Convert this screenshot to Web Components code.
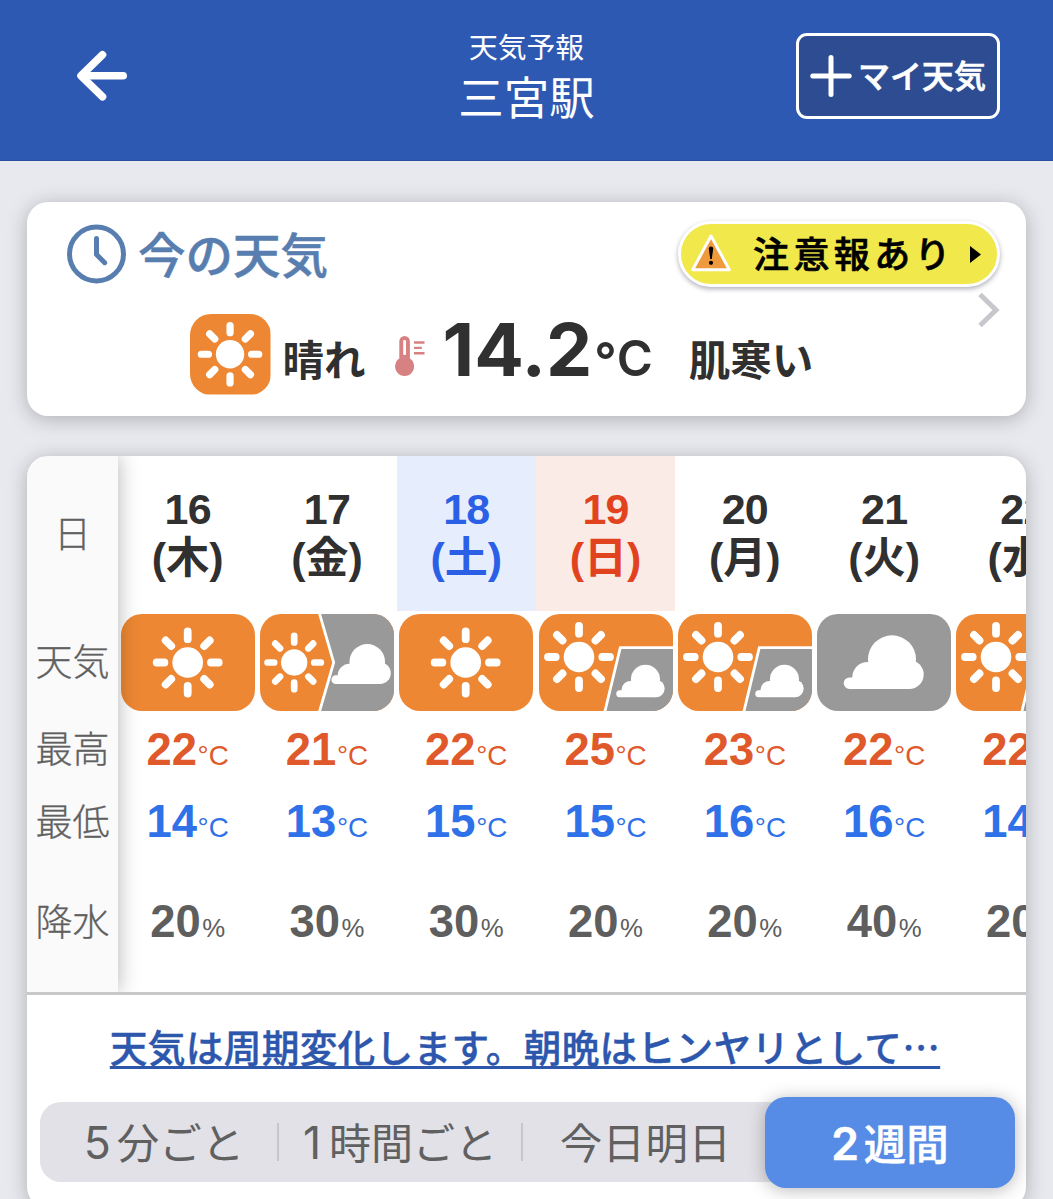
<!DOCTYPE html>
<html lang="ja">
<head>
<meta charset="utf-8">
<title>天気予報 三宮駅</title>
<style>
  html, body { margin: 0; height: 1199px; overflow: hidden; }
  body {
    background: #e8e9ee;
    color: #303030;
    font-family: "Liberation Sans", "Noto Sans CJK JP", sans-serif;
  }
</style>
</head>
<body>
<weather-app></weather-app>

<script>
// attach a shadow root and fill it from a template
function render(el, html) {
  const template = document.createElement("template");
  template.innerHTML = html;
  el.attachShadow({ mode: "open" });
  el.shadowRoot.appendChild(template.content.cloneNode(true));
}

// sun centred on 0,0
const SUN = `
  <g fill="#fff" stroke="none"><circle r="15.3"/></g>
  <path d="M0-31V-23.3M0 31V23.3M-31 0H-23.3M31 0H23.3M-22-22L-16.5-16.5M22-22L16.5-16.5M-22 22L-16.5 16.5M22 22L16.5 16.5"
    fill="none" stroke="#fff" stroke-width="7.8" stroke-linecap="round"/>`;

// cloud drawn in the 134x97 tile
const CLOUD = `
  <g fill="#fff">
    <circle cx="75" cy="45.3" r="24"/>
    <circle cx="92.2" cy="60.5" r="14.5"/>
    <path d="M32.5 75a5.8 5.8 0 0 1 0-11.6H35.2A15.5 15.5 0 0 1 52 48L92 58V75Z"/>
  </g>`;

const TILES = {
  sunny: `<rect width="134" height="97" fill="#ed8733"/>
    <g transform="translate(66.7 48.5)">${SUN}</g>`,
  cloudy: `<rect width="134" height="97" fill="#999"/>${CLOUD}`,
  "sun-then-cloud": `<rect width="134" height="97" fill="#ed8733"/>
    <path d="M57.9-6L73.7 48.5L57.9 103H140V-6Z" fill="#999" stroke="#fff" stroke-width="2.8"/>
    <g transform="translate(34.2 48.5) scale(.86)">${SUN}</g>
    <g transform="translate(51.6 14.3) scale(.742)">${CLOUD}</g>`,
  "sun-some-cloud": `<rect width="134" height="97" fill="#ed8733"/>
    <path d="M140 33.6H81.3L65.3 100H140Z" fill="#999" stroke="#fff" stroke-width="2.8"/>
    <g transform="translate(40 43)">${SUN}</g>
    <g transform="translate(61.1 37.9) scale(.605)">${CLOUD}</g>`,
};

class WeatherIcon extends HTMLElement {
  constructor() {
    super();
    const kind = this.getAttribute("kind");
    const square = this.hasAttribute("square");
    render(this, `
      <style>
        :host { display: block; width: ${square ? 80.5 : 134}px; height: ${square ? 80.5 : 97}px; border-radius: 21px; overflow: hidden; flex: none; }
        svg { display: block; width: 100%; height: 100%; }
      </style>
      ${square
        ? `<svg viewBox="0 0 80 80"><rect width="80" height="80" fill="#ed8733"/><g transform="translate(39.8 40) scale(.92)">${SUN}</g></svg>`
        : `<svg viewBox="0 0 134 97">${TILES[kind]}</svg>`}
    `);
  }
}
customElements.define("weather-icon", WeatherIcon);

class AppHeader extends HTMLElement {
  constructor() {
    super();
    render(this, `
      <style>
        :host {
          display: grid;
          grid-template-columns: 1fr auto 1fr;
          height: 161px;
          box-sizing: border-box;
          border-bottom: 1px solid #2a4f9e;
          background: #2e59b2;
          color: #fff;
          font-family: "Noto Sans CJK JP", sans-serif;
        }
        .back { margin: 50px 0 0 76px; width: 52px; height: 52px; }
        .title { text-align: center; padding-top: 26px; }
        .sub { font-size: 28.8px; line-height: 40px; }
        .name { font-size: 45.5px; line-height: 58px; }
        button {
          all: unset;
          box-sizing: border-box;
          justify-self: end;
          display: flex;
          align-items: center;
          gap: 6px;
          width: 204px;
          height: 86px;
          margin: 33px 53px 0 0;
          padding-left: 11px;
          border: 3px solid #fff;
          border-radius: 11px;
          background: #2e4c91;
          font-size: 32px;
          font-weight: 500;
          -webkit-text-stroke: .6px;
          line-height: 46px;
          white-space: nowrap;
        }
        button svg { flex: none; }
        .action { margin-top: -4px; }
      </style>
      <svg class="back" viewBox="0 0 52 52" fill="none" stroke="#fff" stroke-width="7.6" stroke-linecap="round" stroke-linejoin="round">
        <path d="M26.5 4.8L5 25.8L26.5 46.8"/><path d="M6 25.8H47.2"/>
      </svg>
      <div class="title">
        <div class="sub"><slot name="sub"></slot></div>
        <div class="name"><slot></slot></div>
      </div>
      <button>
        <svg width="42" height="44" viewBox="0 0 42 44" stroke="#fff" stroke-width="5" stroke-linecap="round"><path d="M21 3.5V40.5M2.8 22H39.2"/></svg>
        <span class="action"><slot name="action"></slot></span>
      </button>
    `);
  }
}
customElements.define("app-header", AppHeader);

class AlertPill extends HTMLElement {
  constructor() {
    super();
    render(this, `
      <style>
        :host {
          display: flex;
          align-items: center;
          box-sizing: border-box;
          width: 322px;
          height: 66px;
          padding-left: 9px;
          border: 3px solid #fff;
          border-radius: 33px;
          background: #f1e84b;
          box-shadow: 0 2px 5px rgba(0, 0, 40, .32);
          color: #000;
          font: 500 36px/52px "Noto Sans CJK JP", sans-serif;
          -webkit-text-stroke: .7px;
          letter-spacing: 4.4px;
          white-space: nowrap;
        }
        .tri { width: 42px; height: 40px; margin: -2px 21px 0 0; flex: none; }
        .text { margin-top: -5px; }
        .arrow { width: 11px; height: 17px; margin-left: 15px; flex: none; }
      </style>
      <svg class="tri" viewBox="0 0 42 40">
        <path d="M21 3L39.3 36.7H2.7Z" fill="#ef9a3d" stroke="#fff" stroke-width="3" stroke-linejoin="round"/>
        <path d="M18.8 15.5Q18.8 13.5 21 13.5T23.2 15.5L21.8 26H20.2Z"/><circle cx="21" cy="29.8" r="2.1"/>
      </svg>
      <span class="text"><slot></slot></span>
      <svg class="arrow" viewBox="0 0 11 17"><path d="M0 0L11 8.5L0 17Z"/></svg>
    `);
  }
}
customElements.define("alert-pill", AlertPill);

class CurrentWeather extends HTMLElement {
  constructor() {
    super();
    render(this, `
      <style>
        :host {
          display: block;
          box-sizing: border-box;
          height: 214px;
          padding: 17px 26px 0 40px;
          border-radius: 21px;
          background: #fff;
          box-shadow: 0 3px 20px rgba(0, 0, 0, .25);
          font-family: "Noto Sans CJK JP", sans-serif;
        }
        .top { display: flex; align-items: center; height: 70px; }
        .top svg { width: 60px; height: 60px; margin-right: 11px; }
        h2 { margin: -2px auto 0 0; color: #587eb0; font-size: 47.5px; font-weight: 500; line-height: 68px; -webkit-text-stroke: .5px; }
        .now { display: flex; align-items: flex-start; height: 110px; margin-top: -1px; }
        weather-icon { margin: 26px 12px 0 123px; }
        .text { font-size: 41.5px; font-weight: 700; line-height: 60px; margin-top: 40px; white-space: nowrap; }
        .thermo { width: 32px; height: 42px; margin: 47px 17px 0 28px; flex: none; }
        .temp { margin: 17px 36px 0 0; font: 700 73.5px/90px Inter, sans-serif; white-space: nowrap; }
        .unit { font-size: 49px; font-weight: 600; margin-left: 2px; }
        .deg { vertical-align: -2px; }
        .chev { width: 24px; height: 36px; margin: 4px 0 0 auto; flex: none; }
      </style>
      <div class="top">
        <svg viewBox="0 0 60 60" fill="none" stroke="#587eb0" stroke-width="5" stroke-linecap="round" stroke-linejoin="round">
          <circle cx="29.5" cy="30" r="27"/><path d="M29.5 14.5V30.5L37.7 38.7"/>
        </svg>
        <h2><slot name="title"></slot></h2>
        <slot name="alert"></slot>
      </div>
      <div class="now">
        <weather-icon kind="sunny" square></weather-icon>
        <span class="text"><slot name="sky"></slot></span>
        <svg class="thermo" viewBox="0 0 32 42">
          <path d="M5.3 6.3a5.3 5.3 0 0 1 10.6 0V23.6a9.5 9.5 0 1 1-10.6 0Z" fill="#d88182"/>
          <rect x="9.2" y="5" width="2.8" height="15" rx="1" fill="#fff"/>
          <path d="M20 7.5H30.5M20 12.9H27.8M20 18.2H30.5" stroke="#d88182" stroke-width="2.4"/>
        </svg>
        <span class="temp"><slot name="temp"></slot><span class="unit"><span class="deg">°</span>C</span></span>
        <span class="text"><slot name="feel"></slot></span>
        <svg class="chev" viewBox="0 0 24 36" fill="none" stroke="#c7c7cd" stroke-width="5"><path d="M4 2.5L20 18L4 33.5"/></svg>
      </div>
    `);
  }
}
customElements.define("current-weather", CurrentWeather);

class ForecastDay extends HTMLElement {
  constructor() {
    super();
    const a = (name) => this.getAttribute(name);
    render(this, `
      <style>
        :host {
          display: flex;
          flex-direction: column;
          align-items: center;
          flex: none;
          width: 139.3px;
          white-space: nowrap;
          --day: #303030;
        }
        :host([tone="sat"]) { --day: #2b60e6; --tint: #e6eefe; }
        :host([tone="sun"]) { --day: #e2431f; --tint: #faebe7; }
        .date {
          box-sizing: border-box;
          width: 100%;
          height: 155px;
          margin-bottom: 3px;
          padding-top: 29px;
          background: var(--tint, transparent);
          color: var(--day);
          font-size: 43px;
          font-weight: 700;
          line-height: 48px;
          text-align: center;
        }
        .date div { height: 48px; }
        .date div:first-child { letter-spacing: -.8px; }
        .date div + div { padding-top: 1px; }
        .row { height: 50px; font-size: 45.4px; font-weight: 700; line-height: 50px; }
        .row small { font-size: 27.8px; font-weight: 400; margin-left: .6px; }
        .high { margin-top: 14px; color: #e0592a; }
        .low { margin-top: 22px; color: #2f71e8; }
        .rain { margin-top: 50px; color: #5e5e5e; }
        .rain small { font-size: 25.8px; margin-left: 1.5px; }
      </style>
      <div class="date"><div>${a("date")}</div><div>(${a("day")})</div></div>
      <weather-icon kind="${a("icon")}"></weather-icon>
      <div class="row high">${a("high")}<small>°C</small></div>
      <div class="row low">${a("low")}<small>°C</small></div>
      <div class="row rain">${a("rain")}<small>%</small></div>
    `);
  }
}
customElements.define("forecast-day", ForecastDay);

class ForecastTable extends HTMLElement {
  constructor() {
    super();
    render(this, `
      <style>
        :host { display: flex; height: 536px; overflow: hidden; border-radius: 21px 21px 0 0; border-bottom: 3px solid #c8c8cb; }
        .labels {
          position: relative;
          flex: none;
          width: 91px;
          background: #fafafa;
          box-shadow: 0 0 20px rgba(0, 0, 0, .3);
          color: #606060;
          font: 300 37px/50px "Noto Sans CJK JP", sans-serif;
          -webkit-text-stroke: .3px;
          text-align: center;
        }
        .labels div { height: 50px; }
      </style>
      <div class="labels">
        <div style="margin-top:51px">日</div>
        <div style="margin-top:78px">天気</div>
        <div style="margin-top:37px">最高</div>
        <div style="margin-top:23px">最低</div>
        <div style="margin-top:50px">降水</div>
      </div>
      <slot></slot>
    `);
  }
}
customElements.define("forecast-table", ForecastTable);

class RangeTabs extends HTMLElement {
  constructor() {
    super();
    render(this, `
      <style>
        :host {
          display: flex;
          align-items: center;
          height: 80px;
          margin: 0 11px 0 13px;
          border-radius: 21px;
          background: #e1e1e7;
          color: #606060;
          font: 400 42.5px/60px Inter, "Noto Sans CJK JP", sans-serif;
          white-space: nowrap;
        }
        .tab { box-sizing: border-box; text-align: center; padding-top: 3px; }
        .sep { width: 2px; height: 38px; background: #c6c6cc; }
        .n { font-size: 44.5px; }
        .on {
          width: 250px;
          height: 91px;
          line-height: 89px;
          border-radius: 21px;
          background: #568ce5;
          box-shadow: 0 2px 18px rgba(0, 0, 0, .28);
          color: #fff;
          font-weight: 500;
          -webkit-text-stroke: .5px;
        }
      </style>
      <span class="tab" style="width:237px;padding-left:11px"><span class="n">5</span><span style="margin-left:6px">分ごと</span></span>
      <i class="sep"></i>
      <span class="tab" style="width:242px"><span class="n">1</span><span style="margin-left:8px;font-size:42px">時間ごと</span></span>
      <i class="sep"></i>
      <span class="tab" style="width:242px;padding-left:3px;letter-spacing:.4px">今日明日</span>
      <span class="tab on"><span class="n" style="font-weight:600">2</span><span style="margin-left:5px">週間</span></span>
    `);
  }
}
customElements.define("range-tabs", RangeTabs);

class ForecastCard extends HTMLElement {
  constructor() {
    super();
    render(this, `
      <style>
        :host {
          display: block;
          height: 752px;
          border-radius: 21px;
          background: #fff;
          box-shadow: 0 3px 20px rgba(0, 0, 0, .25);
        }
        .link {
          height: 107px;
          box-sizing: border-box;
          padding-top: 23px;
          padding-right: 3px;
          text-align: center;
          color: #2d56ad;
          font: 500 37.7px/56px "Noto Sans CJK JP", sans-serif;
          -webkit-text-stroke: .4px;
          letter-spacing: .28px;
          white-space: nowrap;
          text-decoration: underline;
          text-decoration-thickness: 2.5px;
          text-underline-offset: 3.5px;
        }
      </style>
      <slot name="table"></slot>
      <div class="link"><slot name="comment"></slot></div>
      <range-tabs></range-tabs>
    `);
  }
}
customElements.define("forecast-card", ForecastCard);

const days = [
  ["16", "木", "sunny", 22, 14, 20, ""],
  ["17", "金", "sun-then-cloud", 21, 13, 30, ""],
  ["18", "土", "sunny", 22, 15, 30, "sat"],
  ["19", "日", "sun-some-cloud", 25, 15, 20, "sun"],
  ["20", "月", "sun-some-cloud", 23, 16, 20, ""],
  ["21", "火", "cloudy", 22, 16, 40, ""],
  ["22", "水", "sun-some-cloud", 22, 14, 20, ""],
];

class WeatherApp extends HTMLElement {
  constructor() {
    super();
    render(this, `
      <style>
        :host { display: block; }
        main { display: flex; flex-direction: column; gap: 40px; padding: 41px 27px 0; }
      </style>
      <app-header><span slot="sub">天気予報</span>三宮駅<span slot="action">マイ天気</span></app-header>
      <main>
        <current-weather>
          <span slot="title">今の天気</span>
          <alert-pill slot="alert">注意報あり</alert-pill>
          <span slot="sky">晴れ</span>
          <span slot="temp">14.2</span>
          <span slot="feel">肌寒い</span>
        </current-weather>
        <forecast-card>
          <forecast-table slot="table">
            ${days.map((d) => `<forecast-day date="${d[0]}" day="${d[1]}" icon="${d[2]}" high="${d[3]}" low="${d[4]}" rain="${d[5]}" tone="${d[6]}"></forecast-day>`).join("")}
          </forecast-table>
          <span slot="comment">天気は周期変化します。朝晩はヒンヤリとして…</span>
        </forecast-card>
      </main>
    `);
  }
}
customElements.define("weather-app", WeatherApp);
</script>
</body>
</html>
